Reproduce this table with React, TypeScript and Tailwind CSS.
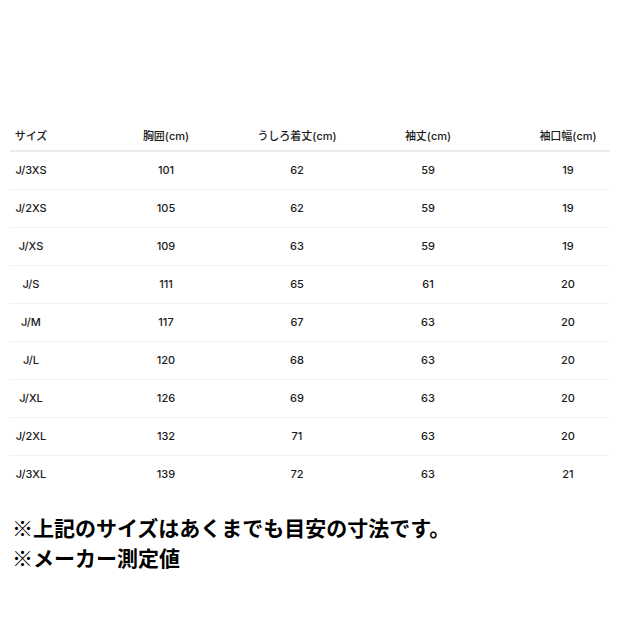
import React from "react";

interface SizeRow {
  size: string;
  chest: number;
  length: number;
  sleeve: number;
  cuff: number;
}

const rows: SizeRow[] = [
  { size: "J/3XS", chest: 101, length: 62, sleeve: 59, cuff: 19 },
  { size: "J/2XS", chest: 105, length: 62, sleeve: 59, cuff: 19 },
  { size: "J/XS", chest: 109, length: 63, sleeve: 59, cuff: 19 },
  { size: "J/S", chest: 111, length: 65, sleeve: 61, cuff: 20 },
  { size: "J/M", chest: 117, length: 67, sleeve: 63, cuff: 20 },
  { size: "J/L", chest: 120, length: 68, sleeve: 63, cuff: 20 },
  { size: "J/XL", chest: 126, length: 69, sleeve: 63, cuff: 20 },
  { size: "J/2XL", chest: 132, length: 71, sleeve: 63, cuff: 20 },
  { size: "J/3XL", chest: 139, length: 72, sleeve: 63, cuff: 21 },
];

const Cells: React.FC<{ values: React.ReactNode[] }> = ({ values }) => (
  <>
    <div className="w-[42px] text-center whitespace-nowrap">{values[0]}</div>
    <div className="ml-[74px] w-[80px] text-center whitespace-nowrap">{values[1]}</div>
    <div className="ml-[41px] w-[100px] text-center whitespace-nowrap">{values[2]}</div>
    <div className="ml-[41px] w-[80px] text-center whitespace-nowrap">{values[3]}</div>
    <div className="ml-[60px] w-[80px] text-center whitespace-nowrap">{values[4]}</div>
  </>
);

export default function App() {
  return (
    <div className="w-[620px] h-[620px] bg-white text-[#1a1a1a] pt-[123px]">
      <div
        className="mx-[10px] w-[600px] text-[11px] font-medium"
        style={{ fontFamily: 'Inter, "Noto Sans CJK JP", sans-serif' }}
      >
        <div className="flex items-center h-[29px] border-b-2 border-[#ebebeb]">
          <Cells values={["サイズ", "胸囲(cm)", "うしろ着丈(cm)", "袖丈(cm)", "袖口幅(cm)"]} />
        </div>
        {rows.map((r, i) => (
          <div
            key={r.size}
            className={
              i === rows.length - 1
                ? "flex items-center h-[37px]"
                : "flex items-center h-[38px] border-b border-[#f2f2f2]"
            }
          >
            <Cells values={[r.size, r.chest, r.length, r.sleeve, r.cuff]} />
          </div>
        ))}
      </div>
      <div
        className="mt-[19px] pl-[12px] text-[21px] leading-[30px] font-bold text-black"
        style={{ fontFamily: '"Noto Sans CJK JP", sans-serif' }}
      >
        <p>※上記のサイズはあくまでも目安の寸法です。</p>
        <p>※メーカー測定値</p>
      </div>
    </div>
  );
}
